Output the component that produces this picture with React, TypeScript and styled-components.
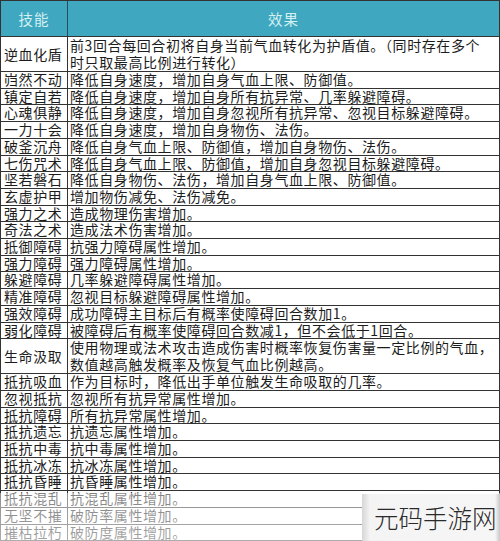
import styled, { createGlobalStyle } from "styled-components";

const GlobalStyle = createGlobalStyle`
  body {
    margin: 0;
    background: #fff;
  }
`;

const Page = styled.div`
  position: relative;
  width: 500px;
  height: 541px;
  overflow: hidden;
  font-family: "Noto Sans CJK SC", "Noto Sans", sans-serif;
  color: #1c1c1c;
`;

const Sheet = styled.div`
  border-top: 1px solid #333;
  border-left: 1px solid #333;
  border-right: 1px solid #333;
`;

const HeadRow = styled.div`
  display: grid;
  grid-template-columns: 67px 1fr;
  height: 35px;
  background: #3fa8c0;
  border-bottom: 1px solid #333;
`;

const HeadCell = styled.div<{ $first?: boolean }>`
  display: flex;
  align-items: center;
  justify-content: center;
  color: #d4f0f2;
  font-size: 14.5px;
  letter-spacing: 1px;
  border-right: ${(p) => (p.$first ? "1px solid #2c4a52" : "none")};
`;

const Row = styled.div<{ $tall?: boolean }>`
  display: grid;
  grid-template-columns: 67px 1fr;
  border-bottom: 1px solid #333;
  font-size: 14px;
  letter-spacing: 0.6px;
  line-height: ${(p) => (p.$tall ? "17px" : "15.7px")};
`;

const SkillCell = styled.div`
  display: flex;
  align-items: center;
  padding-left: 3px;
  border-right: 1px solid #333;
  white-space: nowrap;
`;

const EffectCell = styled.div`
  padding-left: 2px;
  white-space: nowrap;
`;

const Fade = styled.div`
  position: absolute;
  left: 0;
  right: 0;
  top: 493px;
  bottom: 0;
  background: linear-gradient(
    to bottom,
    rgba(255, 255, 255, 0.45),
    rgba(255, 255, 255, 0.6)
  );
`;

const Watermark = styled.div`
  position: absolute;
  right: 0;
  bottom: 0;
  width: 138px;
  height: 47px;
  display: flex;
  align-items: center;
  padding-left: 12px;
  box-sizing: border-box;
  background: linear-gradient(
    to right,
    #d6d6d6,
    #f4f4f4 8px,
    #f6f6f6 calc(100% - 5px),
    #c8c8c8
  );
  color: #2a2a2a;
  font-size: 24.5px;
  font-weight: 300;
  white-space: nowrap;
`;

type Skill = { name: string; effect: string[] };

const skills: Skill[] = [
  {
    name: "逆血化盾",
    effect: ["前3回合每回合初将自身当前气血转化为护盾值。（同时存在多个", "时只取最高比例进行转化）"],
  },
  { name: "岿然不动", effect: ["降低自身速度，增加自身气血上限、防御值。"] },
  { name: "镇定自若", effect: ["降低自身速度，增加自身所有抗异常、几率躲避障碍。"] },
  { name: "心魂俱静", effect: ["降低自身速度，增加自身忽视所有抗异常、忽视目标躲避障碍。"] },
  { name: "一力十会", effect: ["降低自身速度，增加自身物伤、法伤。"] },
  { name: "破釜沉舟", effect: ["降低自身气血上限、防御值，增加自身物伤、法伤。"] },
  { name: "七伤咒术", effect: ["降低自身气血上限、防御值，增加自身忽视目标躲避障碍。"] },
  { name: "坚若磐石", effect: ["降低自身物伤、法伤，增加自身气血上限、防御值。"] },
  { name: "玄虚护甲", effect: ["增加物伤减免、法伤减免。"] },
  { name: "强力之术", effect: ["造成物理伤害增加。"] },
  { name: "奇法之术", effect: ["造成法术伤害增加。"] },
  { name: "抵御障碍", effect: ["抗强力障碍属性增加。"] },
  { name: "强力障碍", effect: ["强力障碍属性增加。"] },
  { name: "躲避障碍", effect: ["几率躲避障碍属性增加。"] },
  { name: "精准障碍", effect: ["忽视目标躲避障碍属性增加。"] },
  { name: "强效障碍", effect: ["成功障碍主目标后有概率使障碍回合数加1。"] },
  { name: "弱化障碍", effect: ["被障碍后有概率使障碍回合数减1，但不会低于1回合。"] },
  {
    name: "生命汲取",
    effect: ["使用物理或法术攻击造成伤害时概率恢复伤害量一定比例的气血，", "数值越高触发概率及恢复气血比例越高。"],
  },
  { name: "抵抗吸血", effect: ["作为目标时，降低出手单位触发生命吸取的几率。"] },
  { name: "忽视抵抗", effect: ["忽视所有抗异常属性增加。"] },
  { name: "抵抗障碍", effect: ["所有抗异常属性增加。"] },
  { name: "抵抗遗忘", effect: ["抗遗忘属性增加。"] },
  { name: "抵抗中毒", effect: ["抗中毒属性增加。"] },
  { name: "抵抗冰冻", effect: ["抗冰冻属性增加。"] },
  { name: "抵抗昏睡", effect: ["抗昏睡属性增加。"] },
  { name: "抵抗混乱", effect: ["抗混乱属性增加。"] },
  { name: "无坚不摧", effect: ["破防率属性增加。"] },
  { name: "摧枯拉朽", effect: ["破防度属性增加。"] },
];

export default function App() {
  return (
    <Page>
      <GlobalStyle />
      <Sheet>
        <HeadRow>
          <HeadCell $first>技能</HeadCell>
          <HeadCell>效果</HeadCell>
        </HeadRow>
        {skills.map((s) => (
          <Row key={s.name} $tall={s.effect.length > 1}>
            <SkillCell>{s.name}</SkillCell>
            <EffectCell>
              {s.effect.map((line, i) => (
                <div key={i}>{line}</div>
              ))}
            </EffectCell>
          </Row>
        ))}
      </Sheet>
      <Fade />
      <Watermark>元码手游网</Watermark>
    </Page>
  );
}
